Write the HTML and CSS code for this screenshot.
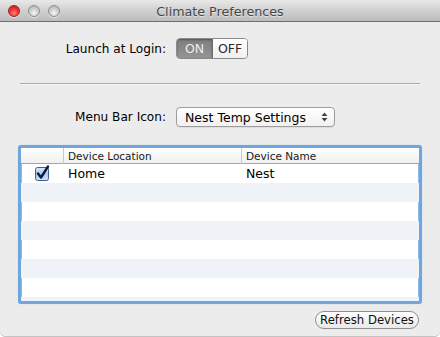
FILE: index.html
```html
<!DOCTYPE html>
<html>
<head>
<meta charset="utf-8">
<link rel="stylesheet" href="styles.css">
</head>
<body>
<div class="window">
  <div class="titlebar">
    <div class="lights">
      <span class="light close"></span>
      <span class="light"></span>
      <span class="light"></span>
    </div>
    <div class="title">Climate Preferences</div>
    <div></div>
  </div>
  <div class="content">
    <div class="row row-launch">
      <span class="label">Launch at Login:</span>
      <div class="switch">
        <span class="seg on">ON</span>
        <span class="seg off">OFF</span>
      </div>
    </div>
    <div class="sep"></div>
    <div class="row row-menu">
      <span class="label">Menu Bar Icon:</span>
      <div class="popup">
        <span class="popup-text">Nest Temp Settings</span>
        <svg class="popup-arrows" width="7" height="10" viewBox="0 0 7 10"><path d="M3.5 0.5 L6.5 4 L0.5 4 Z M3.5 9.5 L6.5 6 L0.5 6 Z" fill="#444"/></svg>
      </div>
    </div>
    <div class="table">
      <div class="thead">
        <div class="cell c-check"></div>
        <div class="cell c-loc">Device Location</div>
        <div class="cell c-name">Device Name</div>
      </div>
      <div class="tbody">
        <div class="tr">
          <div class="cell c-check">
            <svg class="checkbox" width="16" height="16" viewBox="0 0 16 16">
              <defs>
                <linearGradient id="cbg" x1="0" y1="0" x2="0" y2="1">
                  <stop offset="0" stop-color="#d9e8fb"/>
                  <stop offset="0.5" stop-color="#a9c9f2"/>
                  <stop offset="1" stop-color="#cfe2fb"/>
                </linearGradient>
              </defs>
              <rect x="1.5" y="2.5" width="13" height="13" rx="2" fill="url(#cbg)" stroke="#3e5f8c"/>
              <path d="M4 8.5 L7 12.5 L14 1.5" fill="none" stroke="#0d1c3a" stroke-width="2.4" stroke-linecap="round" stroke-linejoin="round"/>
            </svg>
          </div>
          <div class="cell c-loc">Home</div>
          <div class="cell c-name">Nest</div>
        </div>
        <div class="tr"></div>
        <div class="tr"></div>
        <div class="tr"></div>
        <div class="tr"></div>
        <div class="tr"></div>
        <div class="tr"></div>
        <div class="tr"></div>
      </div>
    </div>
    <div class="actions">
      <button class="btn">Refresh Devices</button>
    </div>
  </div>
</div>
</body>
</html>
```
FILE: styles.css
```css
html, body {
  margin: 0;
  padding: 0;
  background: #ffffff;
}
body {
  width: 440px;
  height: 337px;
  overflow: hidden;
  font-family: "Lucida Grande", "DejaVu Sans", sans-serif;
  font-size: 12px;
  color: #000;
}
.window {
  width: 440px;
  height: 336px;
  background: #ececec;
  border-bottom: 1px solid #c4c4c4;
  border-radius: 0 0 5px 5px;
  overflow: hidden;
}
.titlebar {
  height: 21px;
  border-bottom: 1px solid #6e6e6e;
  background: linear-gradient(#e9e9e9, #d2d2d2 45%, #bcbcbc);
  display: grid;
  grid-template-columns: 1fr auto 1fr;
  align-items: center;
}
.lights {
  display: flex;
  gap: 8px;
  padding-left: 8px;
  padding-top: 1px;
}
.light {
  width: 12px;
  height: 12px;
  border-radius: 50%;
  box-sizing: border-box;
  border: 1px solid #8d8d8d;
  background: radial-gradient(circle at 50% 70%, #f6f6f6 0, #d2d2d2 45%, #a9a9a9 100%);
  box-shadow: 0 1px 0 rgba(255,255,255,0.6);
}
.light.close {
  border-color: #9b2420;
  background: radial-gradient(circle at 50% 70%, #ff8a80 0, #f23a2e 45%, #b81a12 100%);
}
.title {
  font-size: 12.7px;
  color: #474747;
  padding-top: 1px;
  text-shadow: 0 1px 0 rgba(255,255,255,0.5);
}
.content {
  padding-top: 16px;
}
.row {
  display: flex;
  align-items: center;
}
.label {
  width: 166px;
  text-align: right;
  margin-right: 10px;
  font-size: 12.1px;
}
.switch {
  display: flex;
  height: 21px;
  box-sizing: border-box;
  border: 1px solid #8a8a8a;
  border-radius: 4px;
  overflow: hidden;
}
.seg {
  display: flex;
  align-items: center;
  justify-content: center;
  font-size: 12.5px;
}
.seg.on {
  width: 35px;
  background: linear-gradient(#7e7e7e, #949494);
  color: #ececec;
  box-shadow: inset 0 1px 2px rgba(0,0,0,0.35);
  border-right: 1px solid #6c6c6c;
}
.seg.off {
  width: 34px;
  background: linear-gradient(#ffffff, #f0f0f0);
  color: #2a2a2a;
}
.sep {
  height: 1px;
  background: #a9a9a9;
  border-bottom: 1px solid #f6f6f6;
  margin: 24px 20px 0 20px;
}
.row-menu {
  margin-top: 22px;
}
.popup {
  width: 159px;
  height: 20px;
  box-sizing: border-box;
  border: 1px solid #9c9c9c;
  border-radius: 4px;
  background: linear-gradient(#ffffff, #f1f1f1);
  display: flex;
  align-items: center;
  justify-content: space-between;
  padding: 0 6px 0 8px;
  box-shadow: 0 1px 0 rgba(0,0,0,0.06);
}
.popup-text {
  font-size: 12.5px;
}
.table {
  margin: 18px 18px 0 18px;
  height: 159px;
  box-sizing: border-box;
  border: 3px solid #6fa7dc;
  border-radius: 3px;
  box-shadow: 0 0 1px 0 #9cc2ea, inset 0 0 0 1px #8dbbe6;
  background: #ffffff;
  overflow: hidden;
}
.thead {
  display: grid;
  grid-template-columns: 42px 178px 1fr;
  height: 15px;
  border-bottom: 1px solid #a6a6a6;
  background: linear-gradient(#ffffff, #f0f0f0);
}
.thead .cell {
  font-size: 10.5px;
  line-height: 15px;
  padding-top: 1px;
  padding-left: 4px;
  border-left: 1px solid #c9c9c9;
  color: #1a1a1a;
}
.thead .c-check {
  border-left: none;
}
.tbody .tr {
  display: grid;
  grid-template-columns: 42px 178px 1fr;
  height: 19px;
  align-items: center;
}
.tbody .tr:nth-child(even) {
  background: #eff3f8;
}
.tbody .cell {
  font-size: 12.5px;
  padding-left: 5px;
}
.tbody .c-check {
  padding-left: 13px;
  height: 19px;
  display: flex;
  align-items: center;
}
.checkbox {
  display: block;
  margin-top: -1px;
}
.actions {
  display: flex;
  justify-content: flex-end;
  padding: 7px 21px 0 0;
}
.btn {
  height: 18px;
  width: 104px;
  box-sizing: border-box;
  border: 1px solid #8e8e8e;
  border-radius: 9px;
  background: linear-gradient(#ffffff, #e9e9e9);
  font-family: "Lucida Grande", "DejaVu Sans", sans-serif;
  font-size: 11.7px;
  color: #111;
  padding: 0;
  line-height: 16px;
}
```
